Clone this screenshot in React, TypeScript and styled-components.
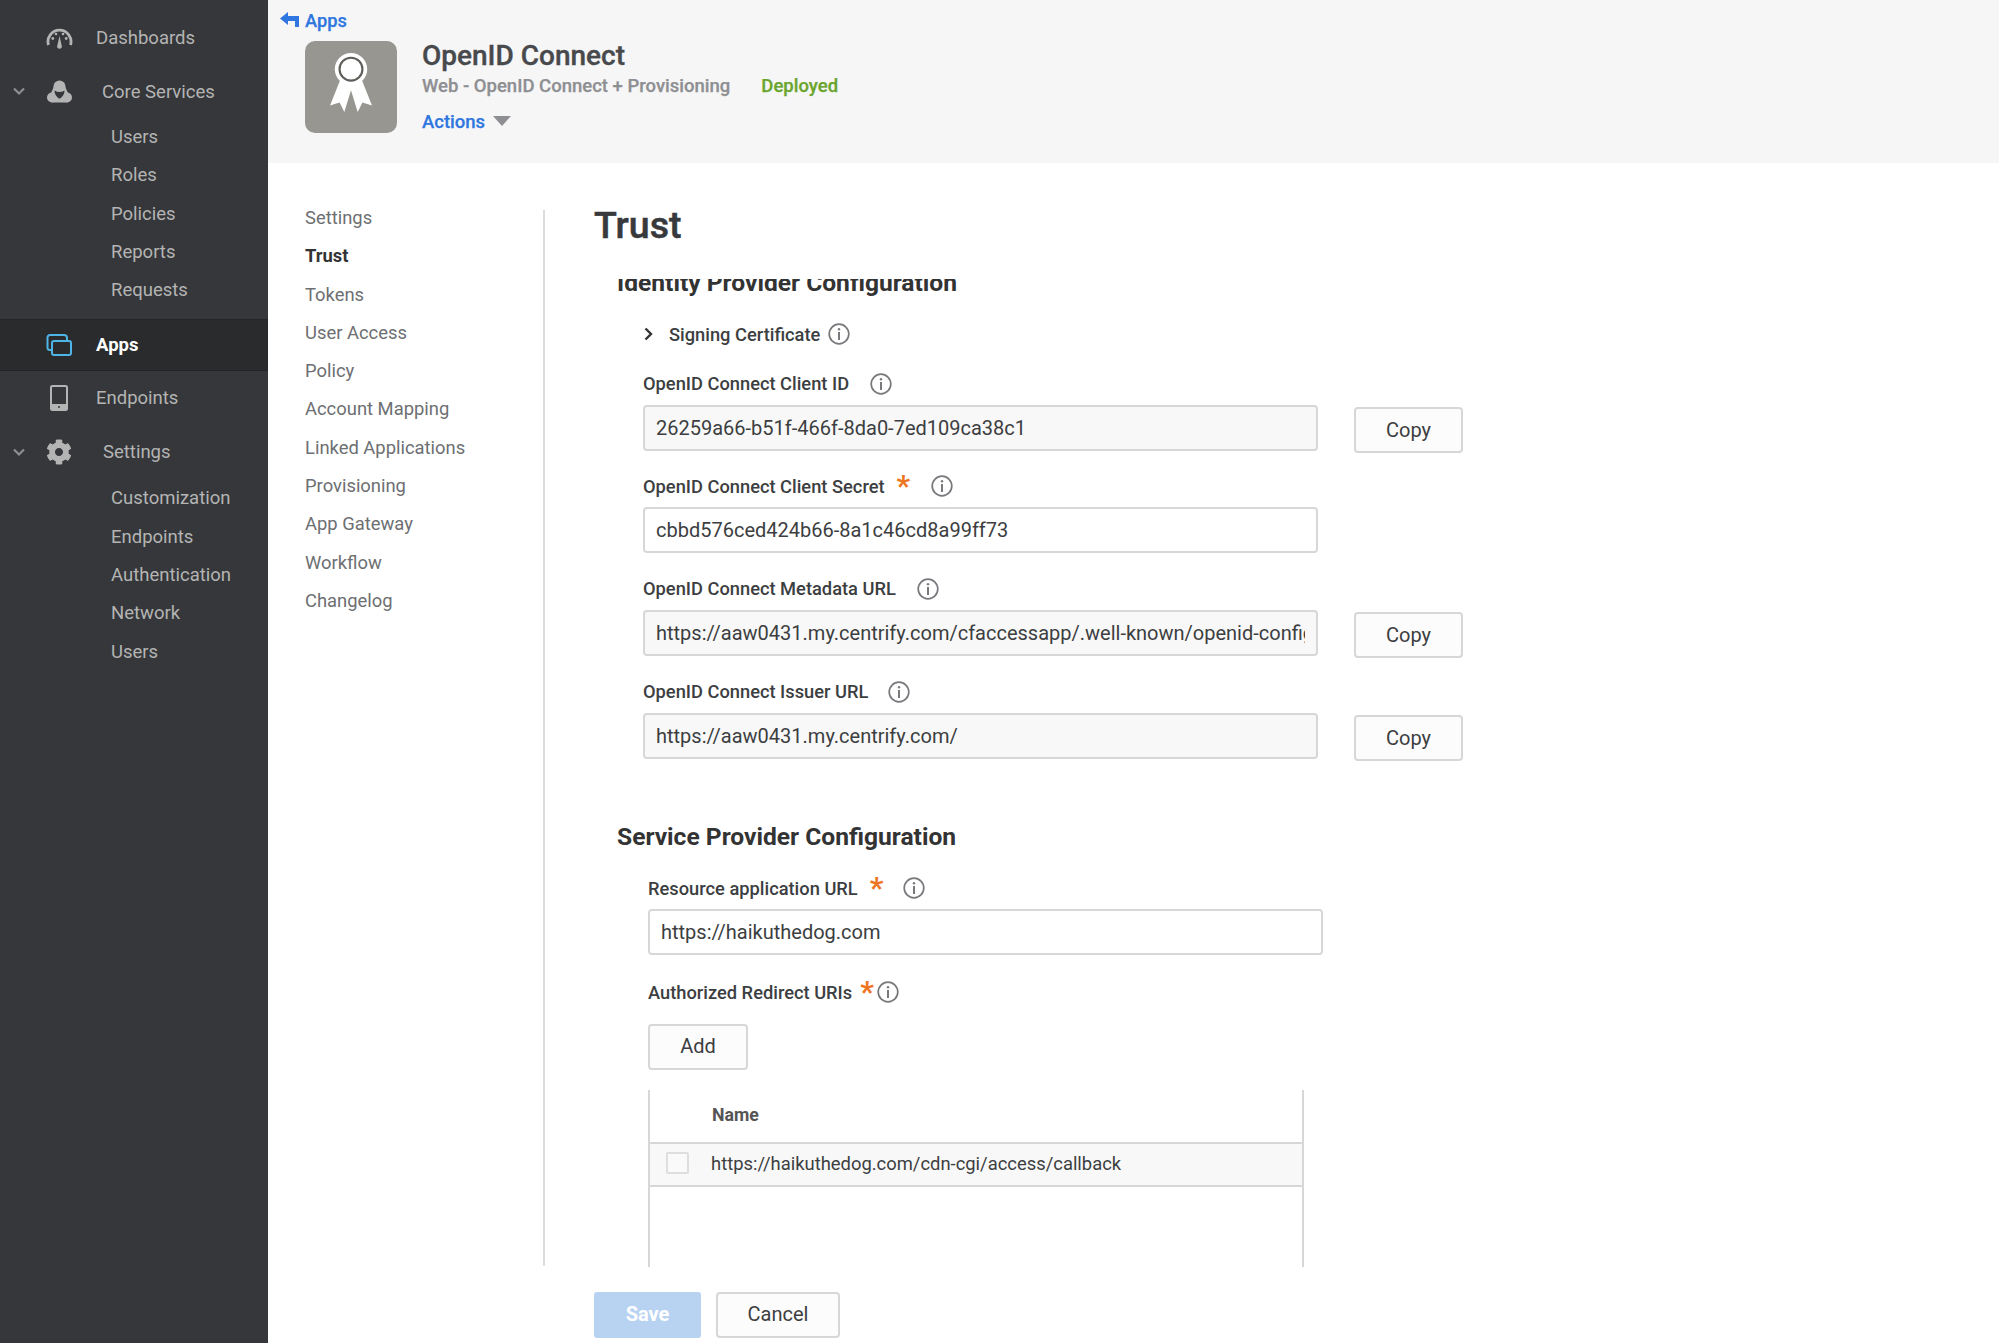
import React from "react";
import styled, { createGlobalStyle } from "styled-components";
import { FaCog } from "react-icons/fa";

const Global = createGlobalStyle`
  html, body { margin: 0; padding: 0; height: 1343px; overflow: hidden; background: #fff; }
  * { box-sizing: border-box; }
  body { font-family: Roboto, "Liberation Sans", sans-serif; font-size: 18px; color: #3c3e41; }
`;

const Page = styled.div`display: flex; width: 1999px; height: 1343px; overflow: hidden;`;
const Sidebar = styled.aside`width: 268px; flex: none; background: #35373a; padding-top: 11px; color: #b4b4b4; font-size: 18.5px;`;
const NavRow = styled.div<{ $active?: boolean; $short?: boolean }>`
  display: flex; align-items: center;
  height: ${(p) => (p.$active ? "52px" : p.$short ? "53px" : "54px")};
  ${(p) => p.$active ? "margin-top: 10px; background: #2a2b2c; border-top: 1px solid #232425; border-bottom: 1px solid #232425; color: #fff; font-weight: 700;" : ""}
`;
const ChevronSlot = styled.span`width: 38px; flex: none; display: flex; justify-content: center; color: #8d8e90;`;
const IconSlot = styled.span`width: 42px; flex: none; display: flex; justify-content: center; align-items: center;`;
const NavText = styled.span<{ $indent: number }>`margin-left: ${(p) => p.$indent}px;`;
const SubItem = styled.div`height: 38.3px; line-height: 38.3px; padding-left: 111px;`;

const Main = styled.main`flex: 1; min-width: 0; display: flex; flex-direction: column;`;
const Header = styled.header`height: 163px; flex: none; background: #f6f6f6; padding: 8px 0 0 12px;`;
const BackLink = styled.div`display: flex; align-items: center; gap: 6px; height: 24px; color: #2f76e0; font-weight: 500; font-size: 18.3px; -webkit-text-stroke: 0.25px #2f76e0;`;
const AppSummary = styled.div`display: flex; margin: 9px 0 0 25px; gap: 25px;`;
const AppTile = styled.div`width: 92px; height: 92px; border-radius: 10px; background: #989690; display: flex; align-items: flex-start; justify-content: center; padding-top: 11px;`;
const AppInfo = styled.div`display: flex; flex-direction: column; margin-top: -2.5px;`;
const AppTitle = styled.div`font-size: 28px; font-weight: 500; color: #48494c; line-height: 34px; -webkit-text-stroke: 0.35px #48494c;`;
const AppMeta = styled.div`display: flex; gap: 31px; font-weight: 500; font-size: 18.5px; color: #8e8f92; line-height: 24px; margin-top: 1px; -webkit-text-stroke: 0.25px currentColor;`;
const Deployed = styled.span`color: #6aa52d;`;
const Actions = styled.div`display: flex; align-items: center; gap: 8px; color: #2f76e0; font-weight: 500; font-size: 18.5px; margin-top: 12px; line-height: 24px; -webkit-text-stroke: 0.25px #2f76e0;`;
const Caret = styled.span`width: 0; height: 0; border-left: 9.5px solid transparent; border-right: 9.5px solid transparent; border-top: 10px solid #8e8f92; margin-top: -2px;`;

const Content = styled.div`flex: 1; display: flex; align-items: flex-start; min-height: 0;`;
const SideNav = styled.nav`width: 275px; flex: none; padding: 36px 0 0 37px;`;
const SideItem = styled.div<{ $current?: boolean }>`
  height: 38.3px; line-height: 38.3px; font-size: 18.4px;
  color: ${(p) => (p.$current ? "#333" : "#6d6f72")};
  font-weight: ${(p) => (p.$current ? 700 : 400)};
`;
const Divider = styled.div`width: 2px; height: 1056px; margin-top: 47px; background: #dcdcdc; flex: none;`;
const Panel = styled.section`width: 1100px; margin-left: 49px; padding-top: 39px;`;
const PageTitle = styled.h1`margin: 0; height: 77px; font-size: 37.5px; line-height: 46px; font-weight: 500; color: #37393c; -webkit-text-stroke: 0.5px #37393c;`;
const ScrollArea = styled.div`height: 988px; overflow: hidden; padding-left: 23px;`;
const SectionTitle = styled.h2<{ $top: number }>`margin: ${(p) => p.$top}px 0 0; height: 32px; line-height: 32px; font-size: 24.6px; font-weight: 700; color: #333; white-space: nowrap;`;
const Disclosure = styled.div`display: flex; align-items: center; height: 30px; margin: 20px 0 22.5px 27px; font-weight: 500; font-size: 18.3px; color: #3c3e41;`;
const DisclosureChevron = styled.span`display: flex; width: 25px; color: #333;`;
const Field = styled.div<{ $indent: number }>`padding-left: ${(p) => p.$indent}px; height: 102.7px;`;
const LabelRow = styled.div`display: flex; align-items: center; height: 24px; margin-bottom: 9px; font-size: 18.3px; font-weight: 500; color: #3c3e41; white-space: nowrap;`;
const Star = styled.span<{ $left: number }>`color: #ee7623; font-size: 30px; font-weight: 700; line-height: 24px; height: 24px; margin-left: ${(p) => p.$left}px;`;
const InfoWrap = styled.span<{ $left: number }>`display: inline-flex; margin-left: ${(p) => p.$left}px;`;
const InputRow = styled.div`display: flex; align-items: flex-start; gap: 36px;`;
const TextInput = styled.input<{ $locked?: boolean }>`
  width: 675px; height: 46px; padding: 0 11px; border: 2px solid #d7d7d7; border-radius: 4px; outline: none;
  font: 400 20px Roboto, sans-serif; color: #3c3e41;
  background: ${(p) => (p.$locked ? "#f8f8f8" : "#fff")};
`;
const Button = styled.button<{ $w: number }>`
  width: ${(p) => p.$w}px; height: 46px; border: 2px solid #d7d7d7; border-radius: 4px; background: #fcfcfc;
  font: 400 20px Roboto, sans-serif; color: #3c3e41; padding: 0 0 2px;
`;
const CopyButton = styled(Button)`margin-top: 2px; padding: 0;`;
const PrimaryButton = styled.button`
  width: 107px; height: 46px; border: 0; border-radius: 3px; background: #b8d2f2; color: #fff;
  font: 700 20px Roboto, sans-serif; padding: 0 0 2px;
`;
const ServiceForm = styled.div`margin-top: 23px;`;
const ShortField = styled.div`padding-left: 31px; margin-bottom: 25px;`;
const UriBlock = styled.div`padding-left: 31px;`;
const UriLabel = styled(LabelRow)`margin-bottom: 20px;`;
const UriTable = styled.div`width: 656px; height: 220px; margin-top: 20px; border-left: 2px solid #d7d7d7; border-right: 2px solid #d7d7d7;`;
const TableHead = styled.div`height: 54px; padding-left: 62px; line-height: 50px; font-weight: 700; font-size: 17.7px; color: #555; border-bottom: 2px solid #d7d7d7;`;
const TableRow = styled.div`height: 43px; display: flex; align-items: center; background: #f8f8f8; border-bottom: 2px solid #d7d7d7; padding: 0 0 2px 16px; gap: 22px; font-size: 18.4px; color: #3c3e41;`;
const Check = styled.span`width: 23px; height: 22px; border: 2px solid #dedede; background: #fafafa; border-radius: 2px; margin-top: -2px;`;
const Footer = styled.div`display: flex; gap: 15px; margin-top: 25px;`;

const Gauge = () => (
  <svg width="27" height="22" viewBox="0 0 27 22" fill="none">
    <path d="M2.500 18 A11.500 11.500 0 1 1 24.500 18" stroke="#b4b4b4" strokeWidth="2.800" />
    <path d="M13.500 9 L15.700 18.500 A2.400 2.400 0 1 1 11.300 18.500 Z" fill="#b4b4b4" />
    <circle cx="6.800" cy="11.500" r="1.400" fill="#b4b4b4" /><circle cx="10" cy="7" r="1.300" fill="#b4b4b4" />
    <circle cx="17" cy="7" r="1.300" fill="#b4b4b4" /><circle cx="20.200" cy="11.500" r="1.400" fill="#b4b4b4" />
  </svg>
);
const Nodes = () => (
  <svg width="25" height="23" viewBox="0 0 25 23" fill="#b4b4b4">
    <circle cx="12.500" cy="6.500" r="6" /><circle cx="5" cy="17.500" r="5" /><circle cx="20" cy="17.500" r="5" />
    <path d="M8 4 L17 4 L24 20 L1 20 Z" />
    <path d="M1.500 19 L5 22.500 H20 L23.500 19 Z" />
    <path d="M7.500 10.500 Q12.500 13.500 17.500 10.500 Q17.500 15 13.500 18.200 Q12.500 18.800 11.500 18.200 Q7.500 15 7.500 10.500 Z" fill="#35373a" />
  </svg>
);
const AppsIcon = () => (
  <svg width="26" height="22" viewBox="0 0 26 22" fill="none" stroke="#4fb4e6" strokeWidth="2">
    <rect x="6" y="7" width="19" height="14" rx="2" />
    <path d="M6 16 H4 A2.500 2.500 0 0 1 1.500 13.500 V3.500 A2.500 2.500 0 0 1 4 1 H18 A3 3 0 0 1 21 4 V7" />
  </svg>
);
const Phone = () => (
  <svg width="18" height="26" viewBox="0 0 18 26">
    <rect x="1" y="1" width="16" height="24" rx="1.500" fill="none" stroke="#b4b4b4" strokeWidth="2" />
    <rect x="1" y="19" width="16" height="6" fill="#b4b4b4" /><circle cx="9" cy="22" r="1" fill="#35373a" />
  </svg>
);
const Chevron = () => (
  <svg width="14" height="9" viewBox="0 0 14 9" fill="none" stroke="currentColor" strokeWidth="2.200"><path d="M2 1.500 L7 6.500 L12 1.500" /></svg>
);
const Right = () => (
  <svg width="9" height="14" viewBox="0 0 9 14" fill="none" stroke="currentColor" strokeWidth="2.400"><path d="M1.500 1.500 L7 7 L1.500 12.500" /></svg>
);
const BackArrow = () => (
  <svg width="19" height="17" viewBox="0 0 19 17" fill="#2f76e0"><path d="M8 0 L0 6.500 L8 13 V9 H15 V15 H19 V4 H8 Z" /></svg>
);
const Ribbon = () => (
  <svg width="44" height="61" viewBox="0 0 46 64">
    <path d="M13 26 L1 56 L11 53 L16 63 L23 40 L30 63 L35 53 L45 56 L33 26 Z" fill="#fff" />
    <circle cx="23" cy="18" r="17" fill="#fff" />
    <circle cx="23" cy="18" r="12" fill="#fff" stroke="#5f5e5a" strokeWidth="2.200" />
  </svg>
);
const Info = () => (
  <svg width="22" height="22" viewBox="0 0 22 22" fill="none">
    <circle cx="11" cy="11" r="9.800" stroke="#77797c" strokeWidth="1.700" />
    <rect x="10" y="9" width="2" height="8" fill="#77797c" /><circle cx="11" cy="6.300" r="1.200" fill="#77797c" />
  </svg>
);

const coreItems = ["Users", "Roles", "Policies", "Reports", "Requests"];
const settingItems = ["Customization", "Endpoints", "Authentication", "Network", "Users"];
const sideItems = ["Settings", "Trust", "Tokens", "User Access", "Policy", "Account Mapping", "Linked Applications", "Provisioning", "App Gateway", "Workflow", "Changelog"];
const idpFields = [
  { label: "OpenID Connect Client ID", value: "26259a66-b51f-466f-8da0-7ed109ca38c1", locked: true, copy: true, info: 21 },
  { label: "OpenID Connect Client Secret", value: "cbbd576ced424b66-8a1c46cd8a99ff73", locked: false, copy: false, star: 12, info: 21 },
  { label: "OpenID Connect Metadata URL", value: "https://aaw0431.my.centrify.com/cfaccessapp/.well-known/openid-configuration", locked: true, copy: true, info: 21 },
  { label: "OpenID Connect Issuer URL", value: "https://aaw0431.my.centrify.com/", locked: true, copy: true, info: 20 },
];

export default function App() {
  return (
    <Page>
      <Global />
      <Sidebar>
        <NavRow><ChevronSlot /><IconSlot><Gauge /></IconSlot><NavText $indent={16}>Dashboards</NavText></NavRow>
        <NavRow $short><ChevronSlot><Chevron /></ChevronSlot><IconSlot><Nodes /></IconSlot><NavText $indent={22}>Core Services</NavText></NavRow>
        {coreItems.map((t) => <SubItem key={t}>{t}</SubItem>)}
        <NavRow $active><ChevronSlot /><IconSlot><AppsIcon /></IconSlot><NavText $indent={16}>Apps</NavText></NavRow>
        <NavRow><ChevronSlot /><IconSlot><Phone /></IconSlot><NavText $indent={16}>Endpoints</NavText></NavRow>
        <NavRow><ChevronSlot><Chevron /></ChevronSlot><IconSlot><FaCog size={26} color="#b4b4b4" /></IconSlot><NavText $indent={23}>Settings</NavText></NavRow>
        {settingItems.map((t, i) => <SubItem key={i}>{t}</SubItem>)}
      </Sidebar>
      <Main>
        <Header>
          <BackLink><BackArrow />Apps</BackLink>
          <AppSummary>
            <AppTile><Ribbon /></AppTile>
            <AppInfo>
              <AppTitle>OpenID Connect</AppTitle>
              <AppMeta><span>Web - OpenID Connect + Provisioning</span><Deployed>Deployed</Deployed></AppMeta>
              <Actions>Actions<Caret /></Actions>
            </AppInfo>
          </AppSummary>
        </Header>
        <Content>
          <SideNav>
            {sideItems.map((t) => <SideItem key={t} $current={t === "Trust"}>{t}</SideItem>)}
          </SideNav>
          <Divider />
          <Panel>
            <PageTitle>Trust</PageTitle>
            <ScrollArea>
              <SectionTitle $top={-12}>Identity Provider Configuration</SectionTitle>
              <Disclosure>
                <DisclosureChevron><Right /></DisclosureChevron>
                Signing Certificate
                <InfoWrap $left={8}><Info /></InfoWrap>
              </Disclosure>
              {idpFields.map((f) => (
                <Field key={f.label} $indent={26}>
                  <LabelRow>
                    {f.label}
                    {f.star ? <Star $left={f.star}>*</Star> : null}
                    <InfoWrap $left={f.info}><Info /></InfoWrap>
                  </LabelRow>
                  <InputRow>
                    <TextInput readOnly value={f.value} $locked={f.locked} />
                    {f.copy ? <CopyButton $w={109}>Copy</CopyButton> : null}
                  </InputRow>
                </Field>
              ))}
              <SectionTitle $top={39}>Service Provider Configuration</SectionTitle>
              <ServiceForm>
                <ShortField>
                  <LabelRow>
                    Resource application URL
                    <Star $left={12}>*</Star>
                    <InfoWrap $left={20}><Info /></InfoWrap>
                  </LabelRow>
                  <TextInput readOnly value="https://haikuthedog.com" />
                </ShortField>
                <UriBlock>
                  <UriLabel>
                    Authorized Redirect URIs
                    <Star $left={8}>*</Star>
                    <InfoWrap $left={3}><Info /></InfoWrap>
                  </UriLabel>
                  <Button $w={100}>Add</Button>
                  <UriTable>
                    <TableHead>Name</TableHead>
                    <TableRow><Check />https://haikuthedog.com/cdn-cgi/access/callback</TableRow>
                  </UriTable>
                </UriBlock>
              </ServiceForm>
            </ScrollArea>
            <Footer>
              <PrimaryButton>Save</PrimaryButton>
              <Button $w={124}>Cancel</Button>
            </Footer>
          </Panel>
        </Content>
      </Main>
    </Page>
  );
}
